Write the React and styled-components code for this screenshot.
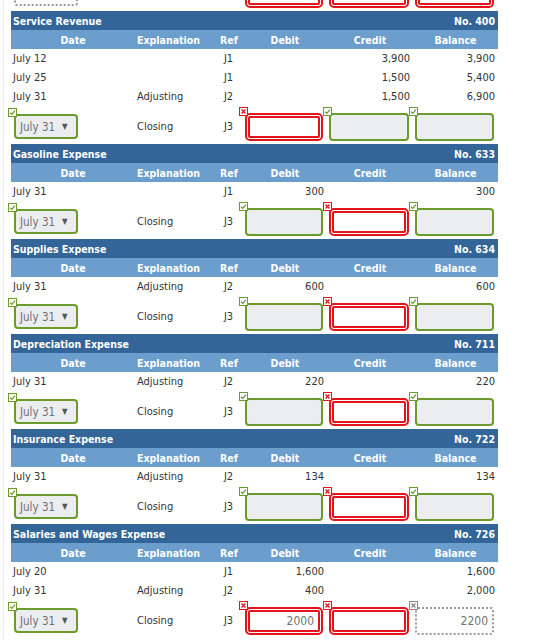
import React from 'react';
import styled, { createGlobalStyle, css } from 'styled-components';

const GlobalStyle = createGlobalStyle`
  html, body {
    margin: 0;
    padding: 0;
    background: #ffffff;
  }
  body {
    font-family: "DejaVu Sans Condensed", "Liberation Sans", Arial, sans-serif;
    font-size: 11px;
    color: #333333;
  }
`;

const accounts = [
  {
    name: 'Service Revenue',
    no: 400,
    rows: [
      ['July 12', '', 'J1', '', '3,900', '3,900'],
      ['July 25', '', 'J1', '', '1,500', '5,400'],
      ['July 31', 'Adjusting', 'J2', '', '1,500', '6,900'],
    ],
    closing: { date: 'ok', debit: 'error', credit: 'ok', balance: 'ok' },
  },
  {
    name: 'Gasoline Expense',
    no: 633,
    rows: [['July 31', '', 'J1', '300', '', '300']],
    closing: { date: 'ok', debit: 'ok', credit: 'error', balance: 'ok' },
  },
  {
    name: 'Supplies Expense',
    no: 634,
    rows: [['July 31', 'Adjusting', 'J2', '600', '', '600']],
    closing: { date: 'ok', debit: 'ok', credit: 'error', balance: 'ok' },
  },
  {
    name: 'Depreciation Expense',
    no: 711,
    rows: [['July 31', 'Adjusting', 'J2', '220', '', '220']],
    closing: { date: 'ok', debit: 'ok', credit: 'error', balance: 'ok' },
  },
  {
    name: 'Insurance Expense',
    no: 722,
    rows: [['July 31', 'Adjusting', 'J2', '134', '', '134']],
    closing: { date: 'ok', debit: 'ok', credit: 'error', balance: 'ok' },
  },
  {
    name: 'Salaries and Wages Expense',
    no: 726,
    rows: [
      ['July 20', '', 'J1', '1,600', '', '1,600'],
      ['July 31', 'Adjusting', 'J2', '400', '', '2,000'],
    ],
    closing: {
      date: 'ok',
      debit: 'error',
      credit: 'error',
      balance: 'blank',
      values: { debit: '2000', balance: '2200' },
    },
  },
];

const COLS = '124px 80px 28px 84px 86px 85px';

const Page = styled.div`
  position: relative;
  padding: 0 0 20px 11px;
  width: 487px;
  &::before {
    content: '';
    position: absolute;
    left: 3px;
    top: 0;
    bottom: 0;
    border-left: 1px solid #ececec;
  }
`;

/* tail of the ledger above, scrolled mostly out of view */
const Clip = styled.div`
  height: 11px;
  overflow: hidden;
  & > div {
    margin-top: -27px;
  }
`;

const TitleBar = styled.div`
  display: flex;
  justify-content: space-between;
  align-items: center;
  height: 19px;
  padding: 0 3px 0 2px;
  background: #336598;
  color: #ffffff;
  font-weight: bold;
  font-size: 10.5px;
`;

const Grid = styled.div`
  display: grid;
  grid-template-columns: ${COLS};
  align-items: center;
`;

const HeadRow = styled(Grid)`
  height: 19px;
  background: #6b9ecd;
  color: #ffffff;
  font-weight: bold;
  font-size: 10.5px;
`;

const HeadCell = styled.div`
  text-align: ${(p) => p.$align || 'center'};
  padding-left: ${(p) => (p.$align === 'left' ? '2px' : '0')};
`;

const DataRow = styled(Grid)`
  height: 19px;
`;

const Cell = styled.div`
  text-align: ${(p) => p.$align || 'left'};
  padding: 0 3px 0 2px;
  white-space: nowrap;
`;

const InputRow = styled(Grid)`
  height: 38px;
  padding-top: 3px;
  box-sizing: border-box;
`;

const Slot = styled.div`
  position: relative;
  margin-left: ${(p) => p.$left || 2}px;
  width: ${(p) => (p.$width ? `${p.$width}px` : 'calc(100% - 6px)')};
`;

const fieldLook = {
  ok: css`
    border: 2px solid #6b9a2d;
    background: #ebedef;
    border-radius: 4px;
  `,
  error: css`
    border: 5px double #e3141b;
    background: #ffffff;
    border-radius: 5px;
  `,
  blank: css`
    border: 2px dotted #9a9a9a;
    background: #ffffff;
    border-radius: 3px;
  `,
};

const Field = styled.div`
  box-sizing: border-box;
  height: ${(p) => p.$h || 28}px;
  display: flex;
  align-items: center;
  justify-content: ${(p) => (p.$select ? 'flex-start' : 'flex-end')};
  padding: 0 4px;
  color: #737373;
  font-size: ${(p) => (p.$select ? 11.5 : 12)}px;
  ${(p) => fieldLook[p.$state]}
`;

const Arrow = styled.span`
  font-size: 8px;
  margin-left: 7px;
  color: #555555;
`;

const badgeColor = { ok: '#6b9a2d', error: '#e3141b', blank: '#888888' };

const Badge = styled.span`
  position: absolute;
  left: -6px;
  top: -6px;
  width: 9px;
  height: 9px;
  box-sizing: border-box;
  border: 1px solid ${(p) => badgeColor[p.$state]};
  background: #ffffff;
  display: flex;
  align-items: center;
  justify-content: center;
  z-index: 1;
`;

const Mark = ({ state }) => (
  <Badge $state={state}>
    {state === 'ok' ? (
      <svg width="7" height="7" viewBox="0 0 7 7">
        <path d="M1 3.8 L2.8 5.4 L6 1.6" fill="none" stroke="#6b9a2d" strokeWidth="1.3" />
      </svg>
    ) : (
      <svg width="7" height="7" viewBox="0 0 7 7">
        <path d="M1.5 1.5 L5.5 5.5 M5.5 1.5 L1.5 5.5" stroke={badgeColor[state]} strokeWidth="1.4" />
      </svg>
    )}
  </Badge>
);

const Entry = ({ state, value }) => (
  <Slot>
    <Mark state={state} />
    <Field $state={state}>{value}</Field>
  </Slot>
);

const ClosingRow = ({ closing, partial }) => {
  const values = closing.values || {};
  return (
    <InputRow>
      <Slot $left={3} $width={64}>
        <Mark state={closing.date} />
        <Field $state={closing.date} $select $h={25}>
          {closing.date === 'blank' ? '' : (
            <>
              July 31<Arrow>▼</Arrow>
            </>
          )}
        </Field>
      </Slot>
      <Cell>{partial ? '' : 'Closing'}</Cell>
      <Cell $align="center">{partial ? '' : 'J3'}</Cell>
      <Entry state={closing.debit} value={values.debit} />
      <Entry state={closing.credit} value={values.credit} />
      <Entry state={closing.balance} value={values.balance} />
    </InputRow>
  );
};

const Ledger = ({ account }) => (
  <div>
    <TitleBar>
      <span>{account.name}</span>
      <span>No. {account.no}</span>
    </TitleBar>
    <HeadRow>
      <HeadCell>Date</HeadCell>
      <HeadCell $align="left">Explanation</HeadCell>
      <HeadCell>Ref</HeadCell>
      <HeadCell>Debit</HeadCell>
      <HeadCell>Credit</HeadCell>
      <HeadCell>Balance</HeadCell>
    </HeadRow>
    {account.rows.map((r, i) => (
      <DataRow key={i}>
        <Cell>{r[0]}</Cell>
        <Cell>{r[1]}</Cell>
        <Cell $align="center">{r[2]}</Cell>
        <Cell $align="right">{r[3]}</Cell>
        <Cell $align="right">{r[4]}</Cell>
        <Cell $align="right">{r[5]}</Cell>
      </DataRow>
    ))}
    <ClosingRow closing={account.closing} />
  </div>
);

export default function App() {
  return (
    <>
      <GlobalStyle />
      <Page>
        <Clip>
          <ClosingRow
            partial
            closing={{ date: 'blank', debit: 'error', credit: 'error', balance: 'error' }}
          />
        </Clip>
        {accounts.map((a) => (
          <Ledger key={a.no} account={a} />
        ))}
      </Page>
    </>
  );
}
